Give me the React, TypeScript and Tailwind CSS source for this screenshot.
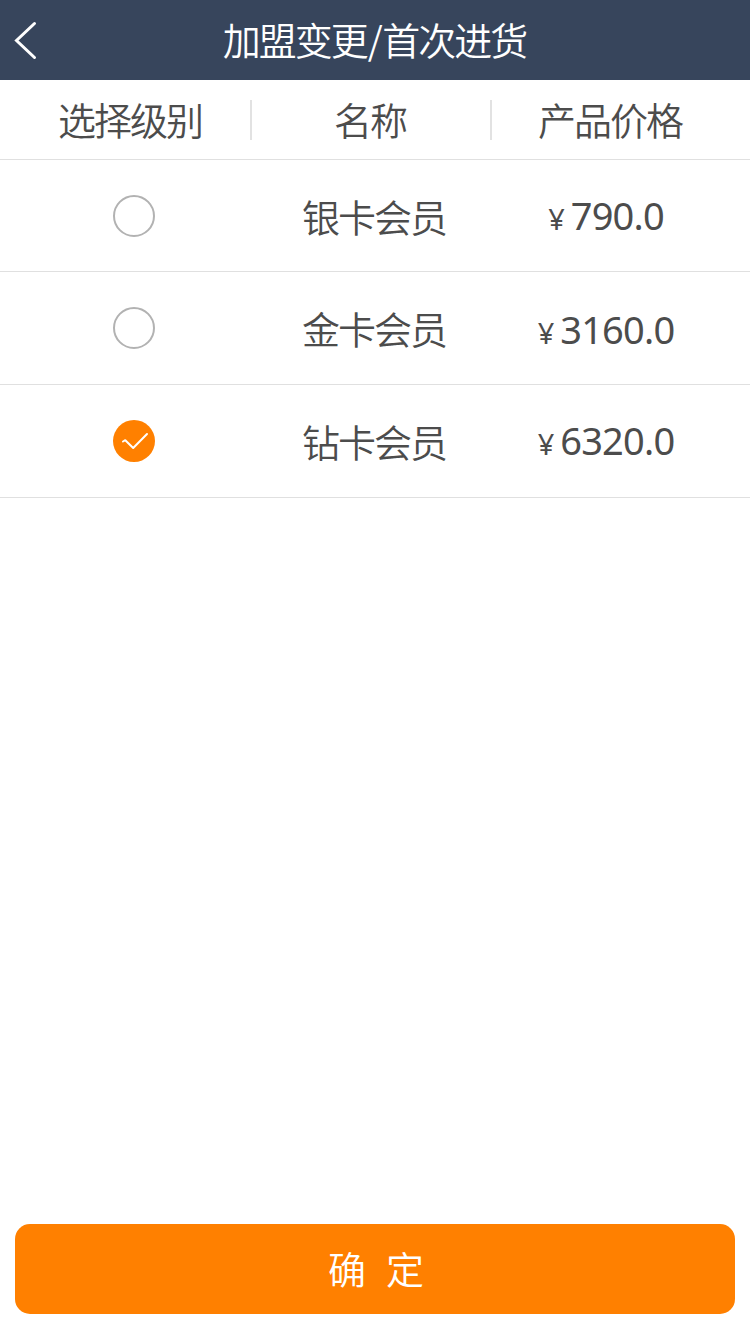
const levels = [
  { name: '银卡会员', price: '790.0', row: 'h-28', namePad: 'pb-0', pricePad: 'pt-0.5' },
  { name: '金卡会员', price: '3160.0', row: 'h-[113px]', namePad: 'pb-px', pricePad: 'pt-[5px]' },
  { name: '钻卡会员', price: '6320.0', row: 'h-[113px]', namePad: 'pb-px', pricePad: 'pt-0.5' },
];

const cjk = "font-['Noto_Sans_CJK_SC',sans-serif] font-[350] text-[38px] leading-[56px] tracking-[-2px] whitespace-nowrap";

function Radio({ checked }: { checked: boolean }) {
  if (!checked) {
    return <span className="block size-[42px] rounded-full border-2 border-[#b2b2b2]" />;
  }
  return (
    <span className="block size-[42px] rounded-full bg-[#ff8000]">
      <svg viewBox="0 0 42 42" className="size-[42px]" fill="none" stroke="#fff" strokeWidth="2" strokeLinecap="round" strokeLinejoin="round">
        <path d="M10 21.5 L12.3 20.2 L20.2 28 L34 14" />
      </svg>
    </span>
  );
}

export default function App() {
  return (
    <div className="flex h-[1334px] w-[750px] flex-col bg-white text-[#4c4c4c]">
      <header className="grid h-20 grid-cols-[60px_1fr_60px] items-center bg-[#37455c] text-white">
        <button type="button" aria-label="返回" className="pl-3">
          <svg width="28" height="44" viewBox="0 0 28 44" fill="none" stroke="currentColor" strokeWidth="3" strokeLinecap="round">
            <path d="M22.5 5.5 L4.5 22.5 L22.5 39.5" />
          </svg>
        </button>
        <h1 className={`${cjk} pb-0.5 pr-px text-center`}>
          加盟变更<span className="mr-[1.5px] ml-px">/</span>首次进货
        </h1>
      </header>

      <div className="grid h-20 grid-cols-[250px_240px_260px] items-center border-b border-[#e0e0e0]">
        <div className={`${cjk} pb-px pl-[58px]`}>选择级别</div>
        <div className="flex h-10 items-center border-l-2 border-[#e2e2e2] pl-[82px]">
          <span className={`${cjk} pb-px`}>名称</span>
        </div>
        <div className="flex h-10 items-center border-l-2 border-[#e2e2e2] pl-[46px]">
          <span className={`${cjk} pb-px`}>产品价格</span>
        </div>
      </div>

      {levels.map((level, index) => (
        <div key={level.name} className={`grid grid-cols-[250px_240px_260px] items-center border-b border-[#e0e0e0] ${level.row}`}>
          <div className="pl-[113px]">
            <Radio checked={index === 2} />
          </div>
          <div className={`${cjk} ${level.namePad} pl-[52px]`}>{level.name}</div>
          <div className={`flex items-baseline justify-center pr-7 font-['Noto_Sans',sans-serif] leading-[56px] ${level.pricePad}`}>
            <span className="mr-[6px] text-[29px]">¥</span>
            <span className="text-[38px] tracking-[-0.8px]">{level.price}</span>
          </div>
        </div>
      ))}

      <button type="button" className="mx-[15px] mt-auto mb-5 flex h-[90px] items-center justify-center gap-[22px] rounded-[15px] bg-[#ff8000] pb-0.5 text-white">
        <span className={cjk}>确</span>
        <span className={cjk}>定</span>
      </button>
    </div>
  );
}
